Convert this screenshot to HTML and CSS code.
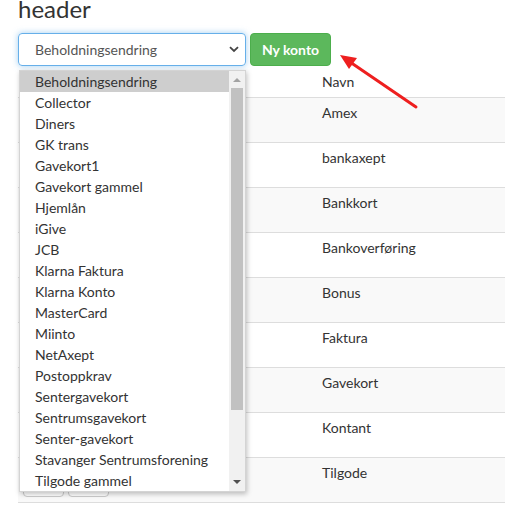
FILE: index.html
```html
<!DOCTYPE html>
<html lang="no">
<head>
    <meta charset="UTF-8">
    <meta name="viewport" content="width=device-width, initial-scale=1.0">
    <title>Betalingsmåter</title>
    <link rel="stylesheet" href="styles.css">
</head>
<body>

    <div class="page">
        <h2 class="title">header</h2>

        <div class="toolbar">
            <div class="select-box">
                <span>Beholdningsendring</span>
                <svg class="chevron" width="10" height="7" viewBox="0 0 10 7"><path d="M1 1.2 L5 5 L9 1.2" fill="none" stroke="#444" stroke-width="1.8"/></svg>
            </div>
            <button class="btn-green">Ny konto</button>
        </div>

        <table class="accounts">
            <thead>
                <tr><th class="col-actions"></th><th>Navn</th></tr>
            </thead>
            <tbody id="rows"></tbody>
        </table>

        <div class="dropdown">
            <ul class="options" id="options"></ul>
            <div class="scrollbar">
                <span class="arrow-up"></span>
                <span class="thumb"></span>
                <span class="arrow-down"></span>
            </div>
        </div>

        <svg class="pointer" width="505" height="130" viewBox="0 0 505 130">
            <line x1="416" y1="107" x2="350" y2="62" stroke="#ee1f1f" stroke-width="3" stroke-linecap="round"/>
            <polygon points="340,55 357,58 349,69" fill="#ee1f1f"/>
        </svg>
    </div>

    <script>
        const names = ['Amex', 'bankaxept', 'Bankkort', 'Bankoverføring', 'Bonus', 'Faktura', 'Gavekort', 'Kontant', 'Tilgode', 'Tilgode gammel'];
        const options = ['Beholdningsendring', 'Collector', 'Diners', 'GK trans', 'Gavekort1', 'Gavekort gammel', 'Hjemlån', 'iGive', 'JCB',
            'Klarna Faktura', 'Klarna Konto', 'MasterCard', 'Miinto', 'NetAxept', 'Postoppkrav', 'Sentergavekort', 'Sentrumsgavekort',
            'Senter-gavekort', 'Stavanger Sentrumsforening', 'Tilgode gammel'];

        const rows = document.getElementById('rows');
        names.forEach(function(name) {
            const tr = document.createElement('tr');
            tr.innerHTML = '<td><div class="actions"><button class="btn-small"></button><button class="btn-small"></button></div></td><td>' + name + '</td>';
            rows.appendChild(tr);
        });

        const list = document.getElementById('options');
        options.forEach(function(text, i) {
            const li = document.createElement('li');
            li.textContent = text;
            if (i === 0) li.className = 'selected';
            list.appendChild(li);
        });
    </script>

</body>
</html>
```
FILE: styles.css
```css
html, body { margin: 0; overflow: hidden; }
body { font-family: Lato, "Open Sans", sans-serif; font-size: 14px; color: #333; background: #fff; }
.page { position: relative; display: flow-root; padding: 0 0 0 18px; }
.title { font-size: 24px; font-weight: normal; line-height: 26px; margin: -4px 0 11px; color: #333; }

.toolbar { display: flex; gap: 4px; }
.select-box { box-sizing: border-box; width: 228px; height: 33px; display: flex; align-items: center; justify-content: space-between; padding: 0 6px 0 16px; border: 1px solid #66afe9; border-radius: 4px; box-shadow: 0 0 6px rgba(102, 175, 233, 0.6); color: #555; }
.chevron { display: block; }
.btn-green { box-sizing: border-box; width: 81px; height: 33px; background: #5cb85c; border: 1px solid #4cae4c; border-radius: 4px; color: #fff; font-family: inherit; font-size: 14px; font-weight: bold; padding: 0; }

.accounts { border-collapse: collapse; width: 487px; margin-top: 1px; }
.accounts th, .accounts td { text-align: left; vertical-align: top; padding: 5px; line-height: 20px; font-weight: normal; }
.accounts thead th { border-bottom: 1px solid #ddd; }
.accounts tbody td { border-top: 1px solid #ddd; }
.accounts tbody tr:nth-child(odd) { background: #f9f9f9; }
.col-actions { width: 289px; }
.actions { display: flex; gap: 4px; padding-top: 8px; }
.btn-small { width: 41px; height: 26px; background: #fff; border: 1px solid #ccc; border-radius: 4px; padding: 0; }

.dropdown { position: absolute; left: 19px; top: 70px; width: 227px; height: 422px; box-sizing: border-box; display: flex; background: #fff; border: 1px solid #d4d4d4; box-shadow: 1px 2px 5px rgba(0, 0, 0, 0.25); }
.options { list-style: none; margin: 0; padding: 0; flex: 1; overflow: hidden; }
.options li { height: 21px; line-height: 21px; padding-left: 15px; white-space: nowrap; color: #333; }
.options li.selected { background: #cecece; }
.scrollbar { width: 16px; background: #f1f1f1; display: flex; flex-direction: column; align-items: center; }
.arrow-up { width: 0; height: 0; margin: 7px 0 6px; border-left: 4px solid transparent; border-right: 4px solid transparent; border-bottom: 4px solid #a3a3a3; }
.thumb { width: 12px; height: 322px; background: #c1c1c1; }
.arrow-down { width: 0; height: 0; margin-top: 70px; border-left: 4px solid transparent; border-right: 4px solid transparent; border-top: 4px solid #505050; }

.pointer { position: absolute; left: 0; top: 0; pointer-events: none; }
```
